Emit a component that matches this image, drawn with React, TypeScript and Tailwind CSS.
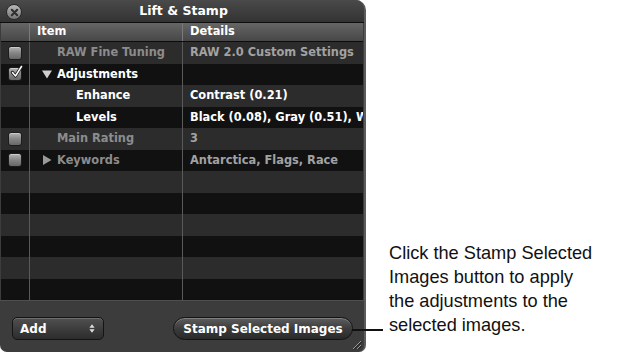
import React from "react";

type Row = {
    check: "on" | "off" | null;
    item: string;
    level: 0 | 1;
    tri?: "down" | "right";
    details: string;
    dim?: boolean;
};

const rows: Row[] = [
    { check: "off", item: "RAW Fine Tuning", level: 0, details: "RAW 2.0 Custom Settings", dim: true },
    { check: "on", item: "Adjustments", level: 0, tri: "down", details: "" },
    { check: null, item: "Enhance", level: 1, details: "Contrast (0.21)" },
    { check: null, item: "Levels", level: 1, details: "Black (0.08), Gray (0.51), White (0.92)" },
    { check: "off", item: "Main Rating", level: 0, details: "3", dim: true },
    { check: "off", item: "Keywords", level: 0, tri: "right", details: "Antarctica, Flags, Race", dim: true },
];

const TOTAL_ROWS = 12;

function CheckBox({ on }: { on: boolean }) {
    return (
        <div className="relative w-[14px] h-[14px] rounded-[3px] border border-[#1c1c1c] bg-gradient-to-b from-[#b4b4b4] via-[#858585] to-[#686868] shadow-[inset_0_1px_0_rgba(255,255,255,0.35)]">
            {on && (
                <svg viewBox="0 0 14 14" className="absolute -top-[3px] left-[1px] w-[14px] h-[14px]">
                    <path d="M2.5 7.5 L5.5 11 L11.5 1.5" fill="none" stroke="#1a1a1a" strokeWidth="3.2" strokeLinecap="round" strokeLinejoin="round" />
                    <path d="M2.5 7.5 L5.5 11 L11.5 1.5" fill="none" stroke="#ffffff" strokeWidth="1.5" strokeLinecap="round" strokeLinejoin="round" />
                </svg>
            )}
        </div>
    );
}

function Triangle({ dir, dim }: { dir: "down" | "right"; dim?: boolean }) {
    const fill = dim ? "#9a9a9a" : "#cfcfcf";
    return (
        <svg viewBox="0 0 10 10" className="w-[10px] h-[10px]">
            {dir === "down" ? <path d="M0 1.5 L10 1.5 L5 9.5 Z" fill={fill} /> : <path d="M1 0 L9.5 5 L1 10 Z" fill={fill} />}
        </svg>
    );
}

function TableRow({ row, index }: { row?: Row; index: number }) {
    const light = index % 2 === 0;
    return (
        <div className={`flex h-[21.5px] ${light ? "bg-[#2c2c2c]" : "bg-[#111111]"}`}>
            <div className="w-[29px] shrink-0 border-r border-[#5a5a5a] flex items-center justify-center">
                {row?.check && <CheckBox on={row.check === "on"} />}
            </div>
            <div className={`w-[153px] shrink-0 border-r border-[#5a5a5a] flex items-center ${row?.level === 1 ? "pl-[46px]" : "pl-[12px]"}`}>
                {row && row.level === 0 && (
                    <span className="w-[15px] shrink-0 flex items-center">{row.tri && <Triangle dir={row.tri} dim={row.dim} />}</span>
                )}
                {row && (
                    <span className={`whitespace-nowrap ${row.dim ? "text-[#8c8c8c]" : "text-white"}`}>{row.item}</span>
                )}
            </div>
            {/* details column clips long values like the original */}
            <div className="flex-1 min-w-0 overflow-hidden flex items-center pl-[7px]">
                {row && (
                    <span className={`whitespace-nowrap ${row.dim ? "text-[#a2a2a2]" : "text-white"}`}>{row.details}</span>
                )}
            </div>
        </div>
    );
}

export default function App() {
    return (
        <div className="w-[624px] h-[354px] bg-white flex items-start relative overflow-hidden">
            {/* <!-- Lift & Stamp window --> */}
            <div className="w-[366px] h-[352px] shrink-0 flex flex-col bg-[#3c3c3c] rounded-tr-[10px] rounded-br-[7px] rounded-bl-[7px] overflow-hidden border-r-[2px] border-[#5c5c5c] font-['DejaVu_Sans',sans-serif] text-[11.4px] font-bold">
                <div className="h-[23px] shrink-0 relative flex items-center justify-center bg-gradient-to-b from-[#4a4a4a] to-[#333333] border-b border-[#0e0e0e]">
                    <div className="absolute left-[6px] top-[4px] w-[16px] h-[16px] rounded-full bg-gradient-to-b from-[#b8b8b8] to-[#767676] border border-[#2a2a2a] flex items-center justify-center">
                        <svg viewBox="0 0 10 10" className="w-[9px] h-[9px]">
                            <path d="M2 2 L8 8 M8 2 L2 8" stroke="#2e2e2e" strokeWidth="2.2" strokeLinecap="round" />
                        </svg>
                    </div>
                    <span className="text-white text-[12.5px] ml-[3px]">Lift &amp; Stamp</span>
                </div>

                <div className="ml-[1px] mr-[1px] flex flex-col">
                    <div className="flex h-[19px] bg-gradient-to-b from-[#666666] to-[#474747] border-b border-[#0c0c0c] text-white">
                        <div className="w-[29px] shrink-0 border-r border-[#7a7a7a]" />
                        <div className="w-[153px] shrink-0 border-r border-[#7a7a7a] pl-[7px] flex items-center">Item</div>
                        <div className="flex-1 pl-[7px] flex items-center">Details</div>
                    </div>
                    {Array.from({ length: TOTAL_ROWS }).map((_, i) => (
                        <TableRow key={i} index={i} row={rows[i]} />
                    ))}
                </div>

                <div className="flex-1 relative border-t border-[#4e4e4e] flex items-center px-[12px] pt-[4px]">
                    <div className="w-[92px] h-[23px] rounded-[5px] border border-[#141414] bg-gradient-to-b from-[#505050] to-[#2c2c2c] shadow-[inset_0_1px_0_rgba(255,255,255,0.18)] flex items-center justify-between pl-[7px] pr-[8px] text-white text-[12px]">
                        <span>Add</span>
                        <svg viewBox="0 0 7 12" className="w-[6px] h-[11px]">
                            <path d="M0.5 5 L3.5 1 L6.5 5 Z M0.5 7 L3.5 11 L6.5 7 Z" fill="#dddddd" />
                        </svg>
                    </div>
                    <div className="ml-auto mr-[-1px] w-[180px] h-[23px] rounded-full border border-[#141414] bg-gradient-to-b from-[#5e5e5e] via-[#3c3c3c] to-[#2a2a2a] shadow-[inset_0_1px_0_rgba(255,255,255,0.22)] flex items-center justify-center text-white text-[12px]">
                        Stamp Selected Images
                    </div>
                    <svg viewBox="0 0 12 12" className="absolute right-[2px] bottom-[2px] w-[12px] h-[12px]">
                        <path d="M11 3 L3 11 M11 7 L7 11" stroke="#9a9a9a" strokeWidth="1" />
                        <path d="M11.5 4 L4 11.5 M11.5 8 L8 11.5" stroke="#1a1a1a" strokeWidth="1" />
                    </svg>
                </div>
            </div>

            {/* <!-- callout line --> */}
            <div className="absolute left-[352px] top-[329px] w-[31px] h-[1.5px] bg-[#111111]" />

            {/* <!-- callout text --> */}
            <div className="ml-[23px] mt-[241px] text-[18.2px] leading-[24px] text-[#111111] font-['Liberation_Sans',sans-serif]">
                <p>Click the Stamp Selected</p>
                <p>Images button to apply</p>
                <p>the adjustments to the</p>
                <p>selected images.</p>
            </div>
        </div>
    );
}
